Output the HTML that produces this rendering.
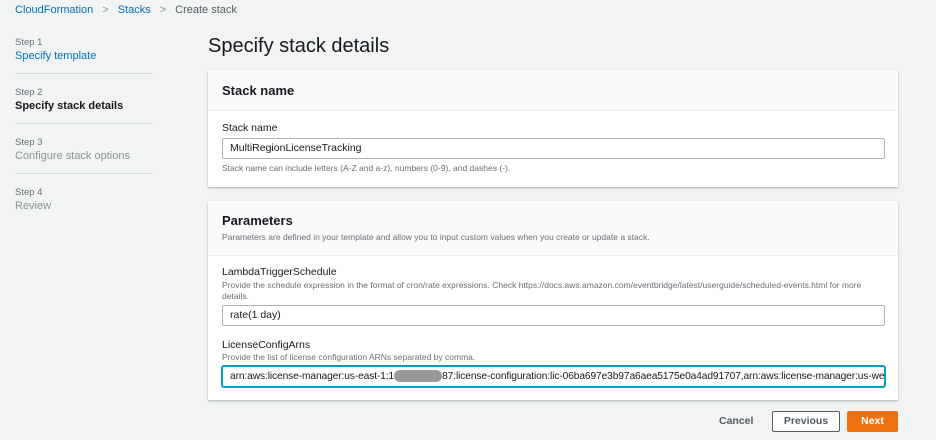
<!DOCTYPE html><html><head><style>
body{margin:0;width:936px;height:440px;background:#f2f3f3;font-family:"Liberation Sans",sans-serif;position:relative;overflow:hidden;color:#16191f}
.a{position:absolute;white-space:nowrap}
.lk{color:#0073bb}
.sm{font-size:9.5px;color:#687078}
.div{position:absolute;left:15px;width:138px;height:1px;background:#d5dbdb}
.panel{position:absolute;left:208px;width:690px;background:#fff;box-shadow:0 1px 2px rgba(0,28,36,.3)}
.hd{background:#fafafa;border-bottom:1px solid #eaeded}
.inp{position:absolute;left:222px;width:663px;height:21px;border:1px solid #aab7b8;border-radius:2px;background:#fff;font-size:10.5px;line-height:19px;padding-left:7px;box-sizing:border-box;overflow:hidden;white-space:nowrap}
.lbl{font-size:10.5px;color:#16191f}
.d{font-size:8.5px;color:#687078}
</style></head><body>
<div class="a" style="left:15px;top:4px;font-size:11px"><span class="lk">CloudFormation</span><span style="color:#879596;margin:0 9px">&gt;</span><span class="lk">Stacks</span><span style="color:#879596;margin:0 9px">&gt;</span><span style="color:#545b64">Create stack</span></div>
<div class="a sm" style="left:15px;top:37px">Step 1</div>
<div class="a lk" style="left:15px;top:50px;font-size:11px">Specify template</div>
<div class="div" style="top:73px"></div>
<div class="a sm" style="left:15px;top:87px">Step 2</div>
<div class="a" style="left:15px;top:100px;font-size:11px;font-weight:bold">Specify stack details</div>
<div class="div" style="top:123px"></div>
<div class="a sm" style="left:15px;top:137px">Step 3</div>
<div class="a" style="left:15px;top:150px;font-size:11px;color:#879596">Configure stack options</div>
<div class="div" style="top:173px"></div>
<div class="a sm" style="left:15px;top:187px">Step 4</div>
<div class="a" style="left:15px;top:200px;font-size:11px;color:#879596">Review</div>
<div class="a" style="left:208px;top:35px;font-size:20px">Specify stack details</div>

<div class="panel" style="top:70px;height:117px"><div class="hd" style="height:40px"></div></div>
<div class="a" style="left:222px;top:83px;font-size:13px;font-weight:bold">Stack name</div>
<div class="a lbl" style="left:222px;top:122px">Stack name</div>
<div class="inp" style="top:138px">MultiRegionLicenseTracking</div>
<div class="a d" style="left:222px;top:163px">Stack name can include letters (A-Z and a-z), numbers (0-9), and dashes (-).</div>

<div class="panel" style="top:201px;height:199px"><div class="hd" style="height:54px"></div></div>
<div class="a" style="left:222px;top:213px;font-size:13px;font-weight:bold">Parameters</div>
<div class="a d" style="left:222px;top:232px">Parameters are defined in your template and allow you to input custom values when you create or update a stack.</div>
<div class="a lbl" style="left:222px;top:266px">LambdaTriggerSchedule</div>
<div class="a d" style="left:222px;top:280px">Provide the schedule expression in the format of cron/rate expressions. Check https://docs.aws.amazon.com/eventbridge/latest/userguide/scheduled-events.html for more</div>
<div class="a d" style="left:222px;top:291px">details.</div>
<div class="inp" style="top:305px">rate(1 day)</div>
<div class="a lbl" style="left:222px;top:339px">LicenseConfigArns</div>
<div class="a d" style="left:222px;top:352px">Provide the list of license configuration ARNs separated by comma.</div>
<div class="inp" style="top:366px;border-color:#00a1c9;box-shadow:0 0 0 1px #00a1c9;font-size:10.2px;letter-spacing:-0.1px">arn:aws:license-manager:us-east-1:1<span style="display:inline-block;width:48px;height:12px;background:#999;border-radius:6px;vertical-align:middle"></span>87:license-configuration:lic-06ba697e3b97a6aea5175e0a4ad91707,arn:aws:license-manager:us-we</div>

<div class="a" style="left:719px;top:415px;font-size:10.5px;font-weight:bold;color:#545b64">Cancel</div>
<div class="a" style="left:772px;top:411px;width:66px;height:19px;border:1px solid #545b64;border-radius:2px;background:#fff;font-size:10.5px;font-weight:bold;color:#545b64;text-align:center;line-height:19px">Previous</div>
<div class="a" style="left:847px;top:411px;width:51px;height:21px;border-radius:2px;background:#ec7211;font-size:10.5px;font-weight:bold;color:#fff;text-align:center;line-height:21px">Next</div>
</body></html>
